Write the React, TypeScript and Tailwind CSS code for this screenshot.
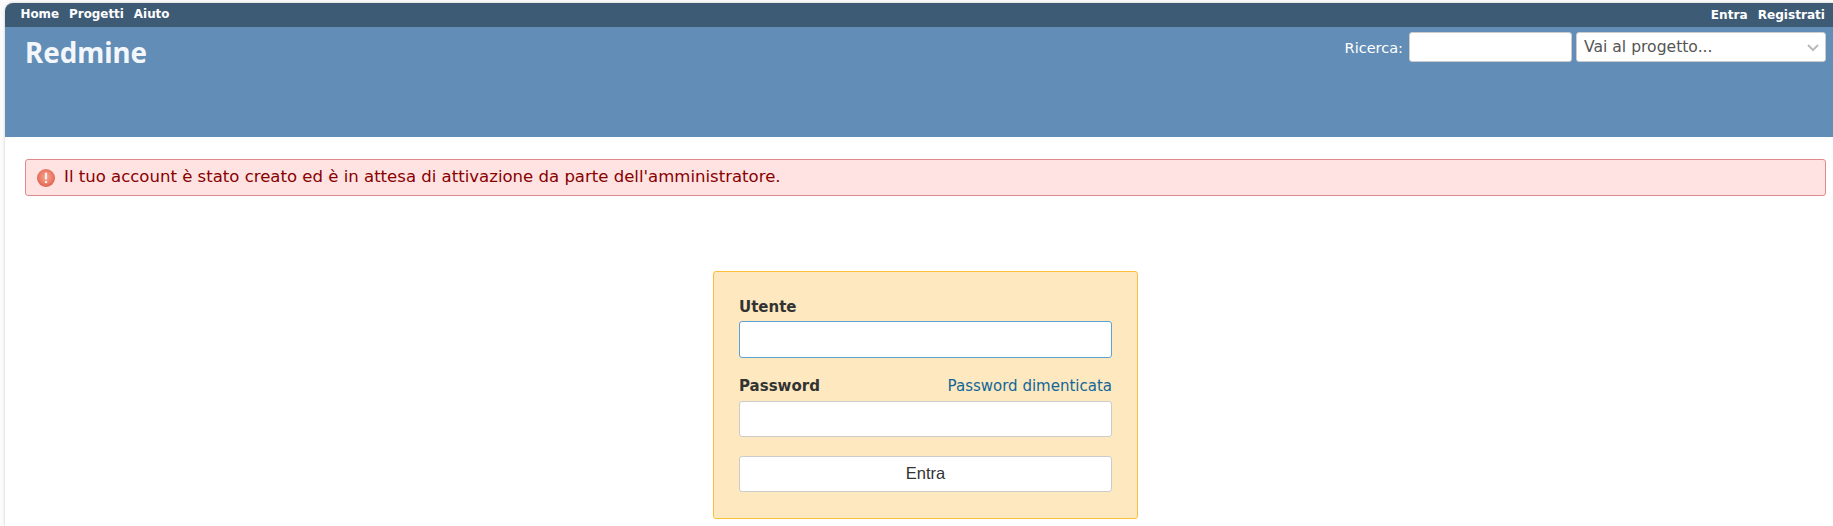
const App = () => {
  return (
    <div className="min-h-[526px] bg-[#fbfbfb] pl-[5px] pt-[3px] font-['DejaVu_Sans',sans-serif] text-[#333]">
      <div className="rounded-tl-[8px] shadow-[0_0_3px_rgba(0,0,0,0.2)]">
        <div className="flex h-[24px] items-center justify-between rounded-tl-[8px] bg-[#3e5b76] pl-[15.5px] pr-[8px] text-[11.9px] font-bold text-white">
          <ul className="flex gap-[10px]">
            <li>Home</li>
            <li>Progetti</li>
            <li>Aiuto</li>
          </ul>
          <ul className="flex gap-[10px] text-[12.1px]">
            <li>Entra</li>
            <li>Registrati</li>
          </ul>
        </div>

        <div className="flex h-[110px] items-start justify-between bg-[#628db6] pl-[20px] pr-[7px] text-white">
          <h1 className="mt-[6px] font-['Noto_Sans',sans-serif] text-[27.7px] font-bold leading-[38px] text-[#f3f7fb]">Redmine</h1>
          <div className="mt-[5px] flex items-center text-[14.5px]">
            <label className="mr-[6px] pt-[3px]">Ricerca:</label>
            <input className="mr-[4px] h-[30px] w-[163px] rounded-[3px] border border-[#ccc] bg-white" />
            <div className="flex h-[30px] w-[250px] items-center justify-between rounded-[3px] border border-[#ccc] bg-white pl-[7px] pr-[5px] text-[15.6px] text-[#555]">
              <span className="pt-[1px]">Vai al progetto...</span>
              <svg width="14" height="14" viewBox="0 0 14 14" fill="none" stroke="#bbb" strokeWidth="2">
                <path d="M2 5l5 5 5-5" />
              </svg>
            </div>
          </div>
        </div>

        <div className="bg-white pl-[20px] pr-[7px] pt-[22px] pb-[7px]">
          <div className="flex h-[37px] items-center gap-[9px] rounded-[3px] border border-[#e08b8b] bg-[#ffe3e3] pl-[11px] text-[16.55px] text-[#880000]">
            <svg width="18" height="18" viewBox="0 0 18 18">
              <defs>
                <radialGradient id="err" cx="50%" cy="45%" r="55%">
                  <stop offset="0%" stopColor="#f8a793" />
                  <stop offset="70%" stopColor="#ea7a66" />
                  <stop offset="100%" stopColor="#d9604c" />
                </radialGradient>
              </defs>
              <circle cx="9" cy="9" r="9" fill="url(#err)" />
              <rect x="7.9" y="3.5" width="2.2" height="7" rx="1" fill="#fff" opacity="0.85" />
              <circle cx="9" cy="13" r="1.3" fill="#fff" opacity="0.85" />
            </svg>
            <span>Il tuo account è stato creato ed è in attesa di attivazione da parte dell'amministratore.</span>
          </div>

          <div className="mx-auto mt-[75px] w-[425px] rounded-[3px] border border-[#fdbf3b] bg-[#fde8bf] px-[25px] pt-[27px] pb-[26px] text-[15px]">
            <label className="block font-bold leading-[17px]">Utente</label>
            <input className="mt-[5px] block h-[37px] w-full rounded-[3px] border border-[#5ca3d1] bg-white" />
            <div className="mt-[20px] flex items-center justify-between leading-[17px]">
              <label className="font-bold">Password</label>
              <a className="text-[#169]">Password dimenticata</a>
            </div>
            <input className="mt-[6px] block h-[36px] w-full rounded-[3px] border border-[#ccc] bg-white" />
            <button className="mt-[19px] block h-[36px] w-full rounded-[3px] border border-[#ccc] bg-white pb-[2px] font-['Liberation_Sans',sans-serif] text-[16.5px]">
              Entra
            </button>
          </div>
        </div>
      </div>
    </div>
  )
}

export default App
